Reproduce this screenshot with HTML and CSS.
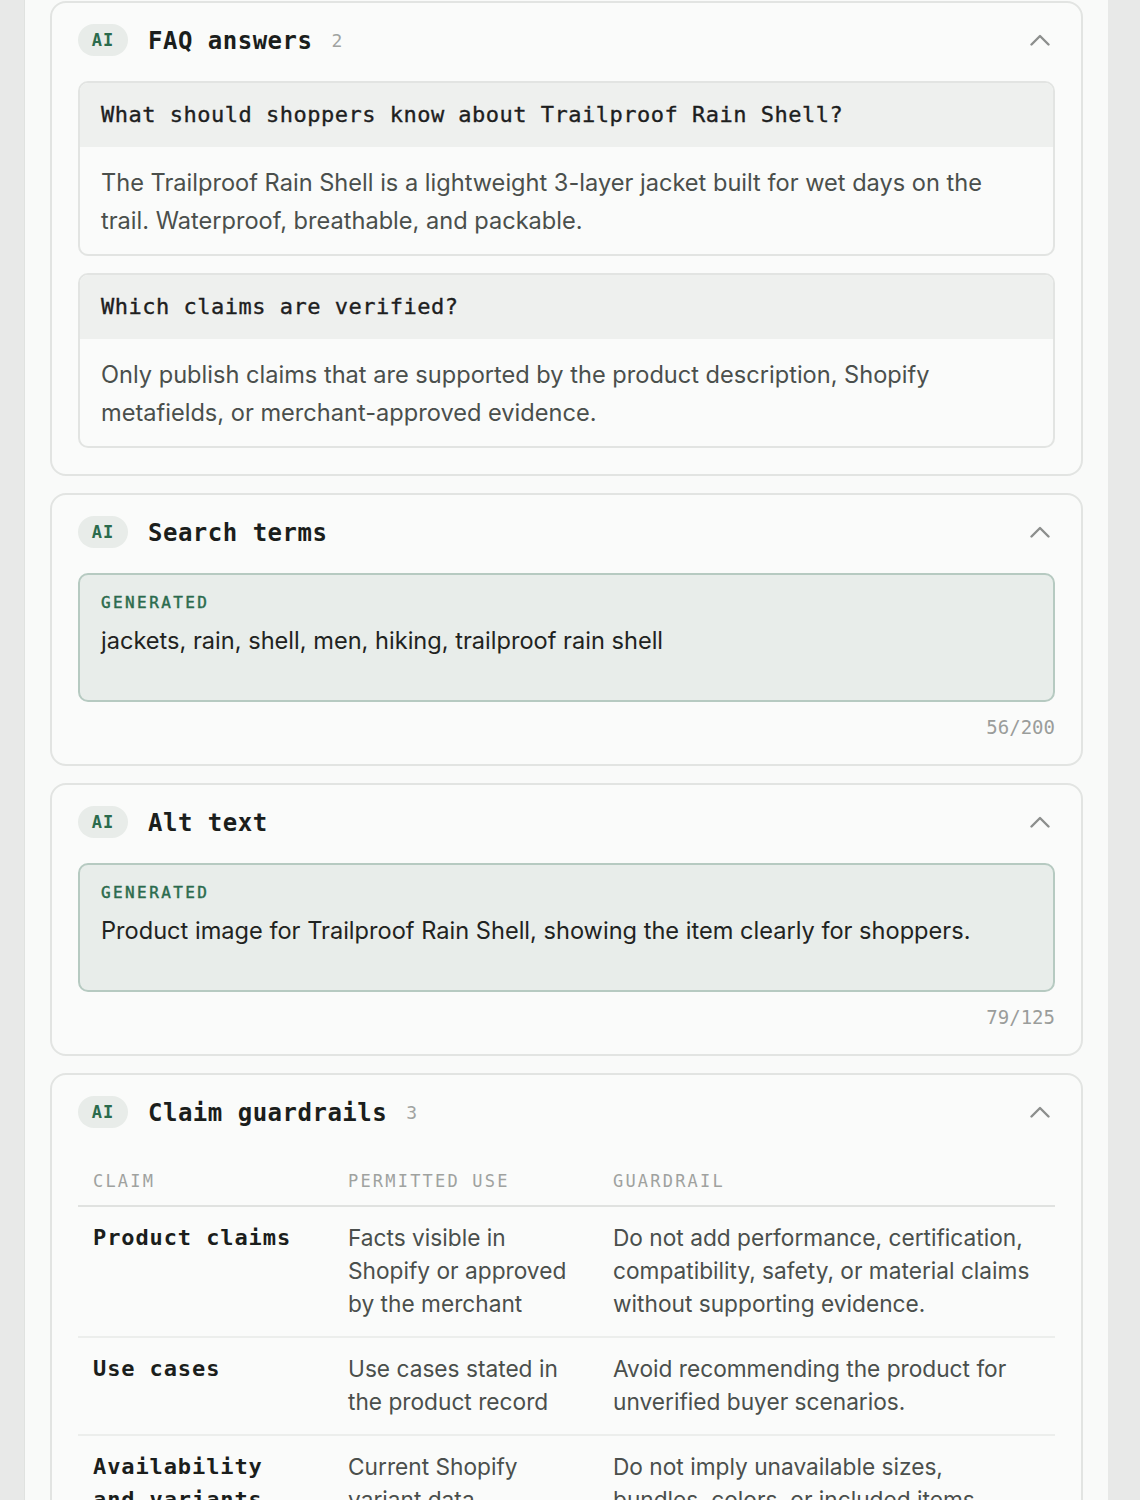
FILE: index.html
```html
<!DOCTYPE html>
<html lang="en">
<head>
<meta charset="utf-8">
<title>Product content</title>
<link rel="stylesheet" href="styles.css">
</head>
<body>
<div class="panel">
  <section class="card">
    <header class="card-head">
      <span class="badge">AI</span>
      <h2 class="card-title">FAQ answers</h2>
      <span class="count">2</span>
      <svg class="chev" viewBox="0 0 20 12" width="20" height="12"><polyline points="1.5,10.5 10,2 18.5,10.5"/></svg>
    </header>
    <div class="faq-list">
      <div class="faq">
        <div class="faq-q">What should shoppers know about Trailproof Rain Shell?</div>
        <div class="faq-a">The Trailproof Rain Shell is a lightweight 3-layer jacket built for wet days on the trail. Waterproof, breathable, and packable.</div>
      </div>
      <div class="faq">
        <div class="faq-q">Which claims are verified?</div>
        <div class="faq-a">Only publish claims that are supported by the product description, Shopify metafields, or merchant-approved evidence.</div>
      </div>
    </div>
  </section>

  <section class="card">
    <header class="card-head">
      <span class="badge">AI</span>
      <h2 class="card-title">Search terms</h2>
      <svg class="chev" viewBox="0 0 20 12" width="20" height="12"><polyline points="1.5,10.5 10,2 18.5,10.5"/></svg>
    </header>
    <div class="gen">
      <div class="gen-label">GENERATED</div>
      <div class="gen-text">jackets, rain, shell, men, hiking, trailproof rain shell</div>
    </div>
    <div class="counter">56/200</div>
  </section>

  <section class="card">
    <header class="card-head">
      <span class="badge">AI</span>
      <h2 class="card-title">Alt text</h2>
      <svg class="chev" viewBox="0 0 20 12" width="20" height="12"><polyline points="1.5,10.5 10,2 18.5,10.5"/></svg>
    </header>
    <div class="gen">
      <div class="gen-label">GENERATED</div>
      <div class="gen-text">Product image for Trailproof Rain Shell, showing the item clearly for shoppers.</div>
    </div>
    <div class="counter">79/125</div>
  </section>

  <section class="card">
    <header class="card-head">
      <span class="badge">AI</span>
      <h2 class="card-title">Claim guardrails</h2>
      <span class="count">3</span>
      <svg class="chev" viewBox="0 0 20 12" width="20" height="12"><polyline points="1.5,10.5 10,2 18.5,10.5"/></svg>
    </header>
    <div class="table">
      <div class="row head">
        <div class="cell">CLAIM</div>
        <div class="cell">PERMITTED USE</div>
        <div class="cell">GUARDRAIL</div>
      </div>
      <div class="row">
        <div class="cell claim">Product claims</div>
        <div class="cell">Facts visible in Shopify or approved by the merchant</div>
        <div class="cell last">Do not add performance, certification, compatibility, safety, or material claims without supporting evidence.</div>
      </div>
      <div class="row">
        <div class="cell claim">Use cases</div>
        <div class="cell">Use cases stated in the product record</div>
        <div class="cell last">Avoid recommending the product for unverified buyer scenarios.</div>
      </div>
      <div class="row">
        <div class="cell claim">Availability and variants</div>
        <div class="cell">Current Shopify variant data</div>
        <div class="cell last">Do not imply unavailable sizes, bundles, colors, or included items.</div>
      </div>
    </div>
  </section>
</div>
</body>
</html>
```
FILE: styles.css
```css
* { box-sizing: border-box; }

html, body {
  margin: 0;
  padding: 0;
  background: #e8e9e8;
}

body {
  font-family: Inter, Roboto, "Noto Sans", sans-serif;
  color: #1d201e;
}

.panel {
  margin: 0 32px 0 24px;
  padding: 1px 25px 40px;
  background: #f9faf9;
  border-left: 1px solid #e0e2e0;
  display: flex;
  flex-direction: column;
  gap: 17px;
}

.card {
  background: #fafbfa;
  border: 2px solid #e2e4e2;
  border-radius: 16px;
  padding: 21px 26px 26px;
}

.card-head {
  display: flex;
  align-items: center;
  height: 32px;
  margin-bottom: 25px;
}

.badge {
  width: 50px;
  height: 32px;
  border-radius: 16px;
  background: #e8ece9;
  color: #2b6b4d;
  font-family: "DejaVu Sans Mono", monospace;
  font-weight: bold;
  font-size: 17px;
  letter-spacing: 1px;
  display: flex;
  align-items: center;
  justify-content: center;
  margin-right: 20px;
}

.card-title {
  margin: 0;
  font-family: "DejaVu Sans Mono", monospace;
  font-weight: bold;
  font-size: 24px;
  letter-spacing: 0.5px;
  color: #1b1e1c;
  position: relative;
  top: 1px;
}

.count {
  margin-left: 19px;
  font-family: "DejaVu Sans Mono", monospace;
  font-size: 18px;
  color: #a0a3a1;
}

.chev {
  margin-left: auto;
  margin-right: 5px;
  fill: none;
  stroke: #8c8f8d;
  stroke-width: 2.4;
  stroke-linecap: round;
  stroke-linejoin: round;
}

.faq-list {
  display: flex;
  flex-direction: column;
  gap: 17px;
}

.faq {
  border: 2px solid #e2e4e2;
  border-radius: 10px;
  overflow: hidden;
  background: #fafbfa;
}

.faq-q {
  background: #eef0ee;
  padding: 18px 21px;
  font-family: "DejaVu Sans Mono", monospace;
  font-size: 22px;
  letter-spacing: 0.5px;
  line-height: 28px;
  color: #1d201e;
  -webkit-text-stroke: 0.35px #1d201e;
}

.faq-a {
  padding: 17px 30px 14px 21px;
  font-size: 23.6px;
  line-height: 38px;
  color: #4a4f4c;
}

.gen {
  background: #e8edea;
  border: 2px solid #b6cac1;
  border-radius: 10px;
  padding: 18px 21px 40px;
}

.gen-label {
  font-family: "DejaVu Sans Mono", monospace;
  font-size: 16px;
  line-height: 20px;
  letter-spacing: 2.4px;
  color: #2b6b4d;
  -webkit-text-stroke: 0.45px #2b6b4d;
}

.gen-text {
  margin-top: 9px;
  font-size: 23.6px;
  line-height: 38px;
  color: #1f2321;
}

.counter {
  margin-top: 14px;
  text-align: right;
  font-family: "DejaVu Sans Mono", monospace;
  font-size: 19px;
  line-height: 22px;
  color: #9a9d9b;
}

.row {
  display: grid;
  grid-template-columns: 255px 265px 1fr;
  border-bottom: 2px solid #eceeec;
}

.row.head {
  border-bottom-color: #e0e2e0;
}

.cell {
  padding: 14px 15px 16px;
  font-size: 22.7px;
  line-height: 33px;
  color: #4a4f4c;
}

.cell.last {
  padding-right: 18px;
}

.row.head .cell {
  padding: 17px 15px 13px;
  font-family: "DejaVu Sans Mono", monospace;
  font-size: 17px;
  line-height: 22px;
  letter-spacing: 2.2px;
  color: #9fa29f;
}

.cell.claim {
  font-family: "DejaVu Sans Mono", monospace;
  font-weight: bold;
  font-size: 22px;
  letter-spacing: 0.9px;
  color: #1b1e1c;
}
```
